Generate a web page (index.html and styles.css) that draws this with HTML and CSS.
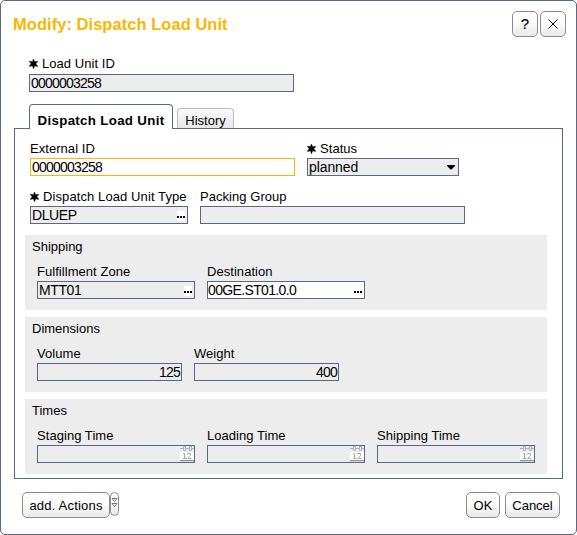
FILE: index.html
```html
<!DOCTYPE html>
<html lang="en">
<head>
<meta charset="utf-8">
<title>Modify: Dispatch Load Unit</title>
<link rel="stylesheet" href="styles.css">
</head>
<body>
<svg width="0" height="0" class="defs" aria-hidden="true">
  <symbol id="req" viewBox="0 0 9 10"><path stroke="#000" stroke-width=".5" d="M4.5 0L5.6 2.8L8.8 2.3L6.8 4.8L8.8 7.4L5.6 6.8L4.5 9.8L3.4 6.8L.2 7.4L2.2 4.8L.2 2.3L3.4 2.8Z"/></symbol>
  <symbol id="cal" viewBox="0 0 14 16"><path fill="#fff" d="M0 6h14v8H0z"/><path fill="#909090" d="M0 14h14v1.2H0z"/><g fill="none" stroke="#b0b0b0"><path d="M0 2.5h3M6 2.5h3M12 2.5h2"/><path d="M3.5 .5h2v4h-2zM9.5 .5h2v4h-2z"/><path stroke="#a8a8a8" d="M3 7.5h1.5v5M3 12.5h4M7.5 8.5v-1h3v2L8 12.5H11.5"/></g></symbol>
</svg>
<main class="window">
  <header class="titlebar">
    <h1>Modify: Dispatch Load Unit</h1>
    <div class="tools">
      <button class="btn tool help"><span>?</span></button>
      <button class="btn tool" aria-label="Close"><svg width="10" height="10" viewBox="0 0 10 10"><path d="M.5 .5L9.5 9.5M9.5 .5L.5 9.5" stroke="#000" fill="none"/></svg></button>
    </div>
  </header>
  <div class="field wide load">
    <label><svg class="req"><use href="#req"/></svg><span>Load Unit ID</span></label>
    <div class="input num">0000003258</div>
  </div>
  <nav class="tabs">
    <div class="tab active">Dispatch Load Unit</div>
    <div class="tab">History</div>
  </nav>
  <section class="panel">
    <div class="row first">
      <div class="field wide"><label>External ID</label><div class="input num focus">0000003258</div></div>
      <div class="field status"><label><svg class="req"><use href="#req"/></svg>Status</label><div class="input word">planned<svg class="arrow" width="8" height="5" viewBox="0 0 8 5"><path d="M0 0h8v1L4.5 4.5h-1L0 1z"/></svg></div></div>
    </div>
    <div class="row second">
      <div class="field mid"><label class="type"><svg class="req"><use href="#req"/></svg>Dispatch Load Unit Type</label><div class="input code">DLUEP<i class="dots"></i></div></div>
      <div class="field wide"><label>Packing Group</label><div class="input"></div></div>
    </div>
    <section class="group">
      <h2>Shipping</h2>
      <div class="row">
        <div class="field mid"><label>Fulfillment Zone</label><div class="input code">MTT01<i class="dots"></i></div></div>
        <div class="field mid"><label>Destination</label><div class="input open dest">00GE.ST01.0.0<i class="dots"></i></div></div>
      </div>
    </section>
    <section class="group">
      <h2>Dimensions</h2>
      <div class="row">
        <div class="field small"><label>Volume</label><div class="input num right">125</div></div>
        <div class="field small"><label>Weight</label><div class="input num right">400</div></div>
      </div>
    </section>
    <section class="group">
      <h2>Times</h2>
      <div class="row">
        <div class="field mid"><label>Staging Time</label><div class="input"><svg class="cal"><use href="#cal"/></svg></div></div>
        <div class="field mid"><label>Loading Time</label><div class="input"><svg class="cal"><use href="#cal"/></svg></div></div>
        <div class="field mid"><label>Shipping Time</label><div class="input"><svg class="cal"><use href="#cal"/></svg></div></div>
      </div>
    </section>
  </section>
  <footer class="actions">
    <button class="btn add">add. Actions</button>
    <button class="btn more" aria-label="More"><svg width="7" height="10" viewBox="0 0 7 10"><g fill="none" stroke="#555" stroke-width=".8"><path d="M1 .5h5L3.5 3.5zM1 5.5h5L3.5 8.5z"/></g></svg></button>
    <button class="btn ok">OK</button>
    <button class="btn cancel">Cancel</button>
  </footer>
</main>
</body>
</html>
```
FILE: styles.css
```css
* { box-sizing: border-box; }
body { margin: 0; background: #fff; color: #000; font: 13px/15px "Liberation Sans", Arial, sans-serif; }
.defs { display: block; }
.window { width: 577px; height: 535px; border: 1px solid #5b6785; border-radius: 5px; background: #fff; }
.titlebar { display: flex; justify-content: space-between; height: 55px; padding: 10px 10px 0 12px; }
h1 { margin: 3px 0 0; font-size: 16.5px; line-height: 20px; letter-spacing: .04px; color: #f9b800; white-space: nowrap; }
.tools { display: flex; gap: 2px; }
.btn { display: flex; align-items: center; justify-content: center; height: 26px; margin: 0; padding: 0; border: 1px solid #8b8b8b; border-radius: 5px; background: linear-gradient(#fff 35%, #e9e9e9); color: #000; font: 13px/15px "Liberation Sans", Arial, sans-serif; white-space: nowrap; }
.tool { width: 26px; }
.help { font-size: 15px; padding-bottom: 1px; -webkit-text-stroke: .2px #000; }
.field { flex: none; }
label { display: flex; align-items: center; height: 17px; padding-bottom: 2px; white-space: nowrap; letter-spacing: .05px; }
.type { letter-spacing: .1px; }
.req { width: 9px; height: 10px; margin-right: 4px; flex: none; overflow: visible; }
.input { display: flex; align-items: center; height: 18px; padding: 1px 1px 0 2px; border: 1px solid #5b6785; background: #ededed; font-size: 14px; line-height: 15px; white-space: nowrap; }
.wide { width: 265px; }
.mid { width: 158px; }
.small { width: 145px; }
.status { width: 152px; }
.num { font-size: 14px; letter-spacing: -.78px; padding-left: 1px; }
.right { justify-content: flex-end; }
.focus { border-color: #f9b800; background: #fff; }
.open { background: #fff; }
.code { padding-left: 1px; letter-spacing: -.4px; }
.dest { padding-left: 0; letter-spacing: -.65px; }
.word { padding-left: 1px; letter-spacing: -.1px; }
.load { margin-left: 28px; }
.load label { height: 18px; padding-bottom: 3px; }
.arrow { margin: 0 2px 0 auto; }
.dots { width: 8px; height: 10px; margin: 0 1px 0 auto; border: solid #fff; border-width: 5px 0 3px; background: repeating-linear-gradient(90deg, #000 0 2px, #fff 2px 3px); }
.cal { width: 14px; height: 16px; margin: -1px -1px 0 auto; }
.tabs { display: flex; align-items: flex-end; height: 25px; margin: 12px 0 -1px 28px; position: relative; }
.tab { height: 20px; width: 57px; margin: 0 0 1px 4px; padding-top: 4px; border: 1px solid #bdbdbd; border-bottom: 0; border-radius: 4px 4px 0 0; background: linear-gradient(#fafafa, #e8e8e8); text-align: center; }
.tab.active { width: 144px; height: 25px; margin: 0; padding-top: 8px; border-color: #5b6785; background: #fff; font-weight: bold; font-size: 13.3px; letter-spacing: .32px; white-space: nowrap; }
.panel { width: 549px; height: 351px; margin-left: 13px; padding: 12px 10px 0; border: 1px solid #5b6785; }
.row { display: flex; gap: 12px; }
.first, .second { padding-left: 5px; }
.second { margin-top: 13px; }
.group { width: 522px; height: 75px; margin-top: 7px; padding: 4px 0 0 12px; background: #ededed; }
.second + .group { margin-top: 11px; }
h2 { margin: 0 0 10px -5px; font-size: 13px; line-height: 15px; font-weight: normal; }
.actions { display: flex; align-items: flex-start; margin: 13px 16px 0 21px; }
.add { width: 88px; letter-spacing: .2px; }
.more { width: 9px; height: 24px; padding: 0 0 2px; }
.more svg { flex: none; }
.ok { width: 34px; margin-left: auto; margin-right: 5px; }
.cancel { width: 55px; }
```
